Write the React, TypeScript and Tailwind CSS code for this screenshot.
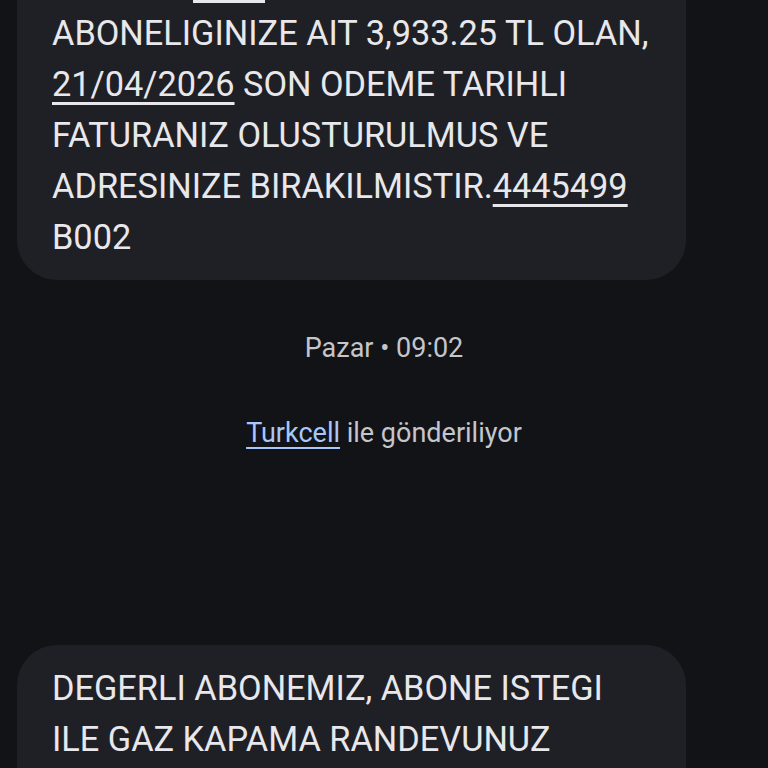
import React from 'react';

const font = { fontFamily: 'Roboto, "Noto Sans", sans-serif' };

function Line({ children }: { children: React.ReactNode }) {
  return (
    <div className="h-[51px] flex items-center whitespace-nowrap">
      <span className="inline-block origin-left scale-x-[0.98] text-[35px] leading-none">{children}</span>
    </div>
  );
}

function Link({ children }: { children: React.ReactNode }) {
  return <span className="underline decoration-[3px] underline-offset-[6px]">{children}</span>;
}

export default function App() {
  return (
    <div className="w-[768px] h-[768px] overflow-hidden bg-[#121317] text-[#e8e8ec] flex flex-col" style={font}>
      {/* previous message, cut at the top */}
      <div className="ml-[17px] w-[669px] h-[280px] shrink-0 rounded-b-[40px] bg-[#1f2025] pl-[35px] flex flex-col">
        <div className="ml-[141px] w-[72px] h-[3px] bg-[#e8e8ec]" />
        <div className="mt-[5px]">
          <Line>ABONELIGINIZE AIT 3,933.25 TL OLAN,</Line>
          <Line>
            <Link>21/04/2026</Link> SON ODEME TARIHLI
          </Line>
          <Line>FATURANIZ OLUSTURULMUS VE</Line>
          <Line>
            ADRESINIZE BIRAKILMISTIR.<Link>4445499</Link>
          </Line>
          <Line>B002</Line>
        </div>
      </div>

      <div className="mt-[48px] text-center text-[27px] text-[#c4c6cc]">Pazar • 09:02</div>

      <div className="mt-[44px] text-center text-[27px] text-[#c4c6cc]">
        <span className="text-[#a8c7fa] underline decoration-[2px] underline-offset-[5px]">Turkcell</span> ile
        gönderiliyor
      </div>

      <div className="mt-[192px] ml-[17px] w-[669px] rounded-t-[40px] bg-[#1f2025] pl-[35px] pt-[18px] flex-1">
        <Line>DEGERLI ABONEMIZ, ABONE ISTEGI</Line>
        <Line>ILE GAZ KAPAMA RANDEVUNUZ</Line>
      </div>
    </div>
  );
}
